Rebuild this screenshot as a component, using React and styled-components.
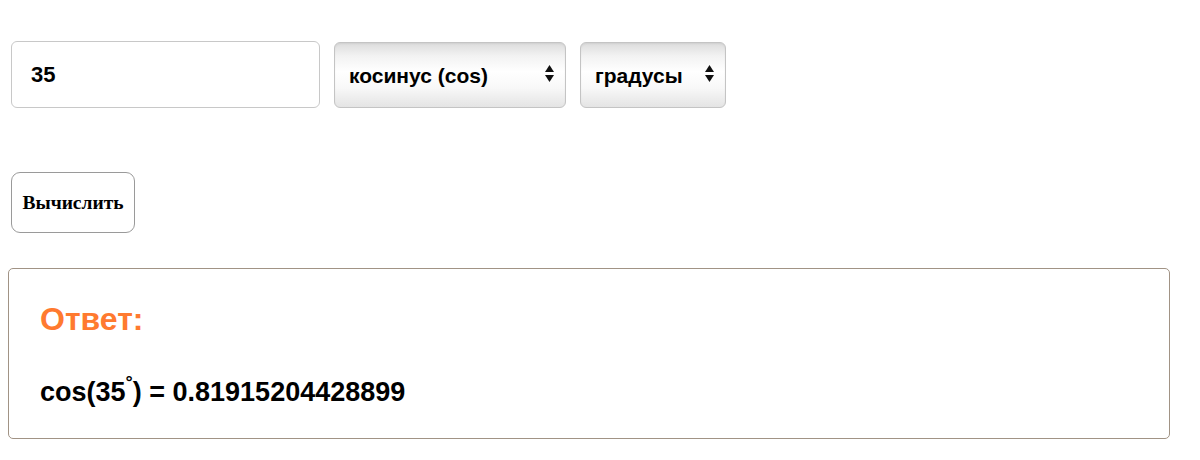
import React from "react";
import styled, { createGlobalStyle } from "styled-components";

const GlobalStyle = createGlobalStyle`
  body {
    margin: 0;
    background: #fff;
    font-family: "Liberation Sans", Arial, sans-serif;
  }
`;

const Page = styled.div`
  padding: 41px 8px 0 8px;
`;

const Row = styled.div`
  display: flex;
  align-items: flex-start;
  gap: 14px;
  padding-left: 3px;
`;

const NumberInput = styled.input`
  box-sizing: border-box;
  width: 309px;
  height: 67px;
  padding: 0 19px;
  border: 1px solid #c8c8c8;
  border-radius: 6px;
  font-family: "Liberation Sans", Arial, sans-serif;
  font-weight: bold;
  font-size: 22px;
  color: #000;
  outline: none;
`;

const SelectWrap = styled.div`
  position: relative;
  margin-top: 1px;
  width: ${(p) => p.$width}px;
`;

const Select = styled.select`
  appearance: none;
  box-sizing: border-box;
  width: 100%;
  height: 66px;
  padding: 0 14px;
  border: 1px solid #c4c4c4;
  border-radius: 6px;
  background: linear-gradient(
    to bottom,
    #dcdcdc 0%,
    #f2f2f2 20%,
    #ffffff 45%,
    #f8f8f8 70%,
    #e4e4e4 100%
  );
  box-shadow: inset 0 1px 2px rgba(0, 0, 0, 0.06);
  font-family: "Liberation Sans", Arial, sans-serif;
  font-weight: bold;
  font-size: 21px;
  color: #000;
  outline: none;
`;

const Arrows = styled.svg`
  position: absolute;
  right: 12px;
  top: 23px;
  pointer-events: none;
`;

const ButtonRow = styled.div`
  padding: 64px 0 0 3px;
`;

const CalcButton = styled.button`
  box-sizing: border-box;
  width: 124px;
  height: 61px;
  padding: 0;
  border: 1px solid #9a9a9a;
  border-radius: 9px;
  background: #fff;
  font-family: "Liberation Serif", "Times New Roman", serif;
  font-weight: bold;
  font-size: 19.5px;
  color: #000;
  cursor: pointer;
`;

const ResultBox = styled.div`
  box-sizing: border-box;
  width: 1162px;
  height: 171px;
  margin-top: 35px;
  padding: 32px 31px 0;
  border: 1px solid #a19385;
  border-radius: 5px;
`;

const Heading = styled.h2`
  margin: 0;
  color: #ff7a2f;
  font-size: 32px;
  font-weight: bold;
`;

const Answer = styled.p`
  margin: 39px 0 0;
  font-size: 27px;
  font-weight: bold;
  color: #000;

  sup {
    font-size: 18px;
    vertical-align: 13px;
    line-height: 0;
  }
`;

function SelectArrows() {
  return (
    <Arrows width="9" height="17" viewBox="0 0 9 17">
      <path d="M4.5 0 L9 7 L0 7 Z" fill="#111" />
      <path d="M0 10 L9 10 L4.5 17 Z" fill="#111" />
    </Arrows>
  );
}

export default function App() {
  const [value, setValue] = React.useState("35");
  const [fn, setFn] = React.useState("cos");
  const [unit, setUnit] = React.useState("deg");

  return (
    <>
      <GlobalStyle />
      <Page>
        <Row>
          <NumberInput value={value} onChange={(e) => setValue(e.target.value)} />
          <SelectWrap $width={232}>
            <Select value={fn} onChange={(e) => setFn(e.target.value)}>
              <option value="sin">синус (sin)</option>
              <option value="cos">косинус (cos)</option>
              <option value="tan">тангенс (tg)</option>
              <option value="cot">котангенс (ctg)</option>
            </Select>
            <SelectArrows />
          </SelectWrap>
          <SelectWrap $width={146}>
            <Select value={unit} onChange={(e) => setUnit(e.target.value)}>
              <option value="deg">градусы</option>
              <option value="rad">радианы</option>
            </Select>
            <SelectArrows />
          </SelectWrap>
        </Row>
        <ButtonRow>
          <CalcButton>Вычислить</CalcButton>
        </ButtonRow>
        <ResultBox>
          <Heading>Ответ:</Heading>
          <Answer>
            cos(35<sup>°</sup>) = 0.81915204428899
          </Answer>
        </ResultBox>
      </Page>
    </>
  );
}
